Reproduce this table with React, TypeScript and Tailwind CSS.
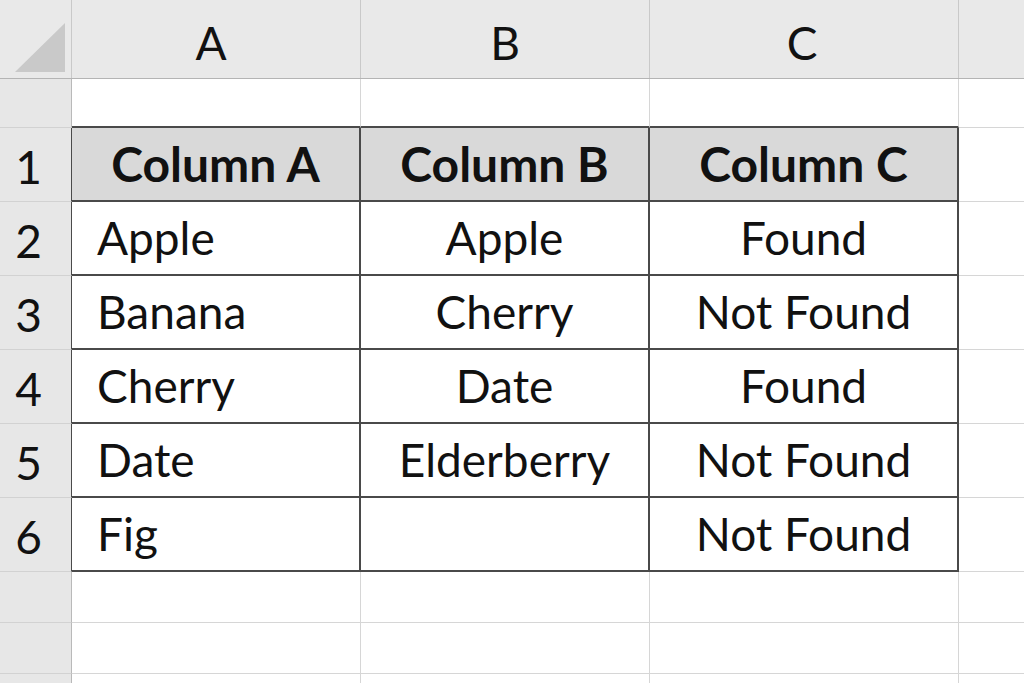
import React from "react";

type Row = { num: string; a: string; b: string; c: string };

const data: Row[] = [
  { num: "2", a: "Apple", b: "Apple", c: "Found" },
  { num: "3", a: "Banana", b: "Cherry", c: "Not Found" },
  { num: "4", a: "Cherry", b: "Date", c: "Found" },
  { num: "5", a: "Date", b: "Elderberry", c: "Not Found" },
  { num: "6", a: "Fig", b: "", c: "Not Found" },
];

const font = { fontFamily: "Lato, 'Open Sans', sans-serif" };

const RowHead = ({ label, h, dark }: { label?: string; h: string; dark?: boolean }) => (
  <div
    className={`w-[72px] shrink-0 ${h} flex items-center justify-center pr-[14px] pt-[4px] bg-[#e7e7e7] border-b border-[#d2d2d2] border-r ${
      dark ? "border-r-[#4a4a4a]" : "border-r-[#b9b9b9]"
    } text-[46px] text-[#111] leading-none`}
  >
    {label}
  </div>
);

const App: React.FC = () => {
  return (
    <div className="w-[1024px] h-[683px] overflow-hidden bg-white" style={font}>
      {/* column letters */}
      <div className="flex h-[79px] bg-[#e9e9e9] border-b border-[#b4b4b4]">
        <div className="w-[72px] shrink-0 relative border-r border-[#c9c9c9]">
          <svg className="absolute left-0 top-0" width="72" height="78" viewBox="0 0 72 78">
            <polygon points="15,72 65,72 65,23" fill="#c9c9c9" />
          </svg>
        </div>
        <div className="w-[289px] shrink-0 flex items-center justify-center pt-[8px] pr-[10px] border-r border-[#c9c9c9] text-[46px] text-[#111] leading-none">A</div>
        <div className="w-[289px] shrink-0 flex items-center justify-center pt-[8px] border-r border-[#c9c9c9] text-[46px] text-[#111] leading-none">B</div>
        <div className="w-[309px] shrink-0 flex items-center justify-center pt-[8px] pr-[4px] border-r border-[#c9c9c9] text-[46px] text-[#111] leading-none">C</div>
        <div className="flex-1" />
      </div>

      {/* empty row above table */}
      <div className="flex">
        <RowHead h="h-[49px]" />
        <div className="w-[289px] shrink-0 h-[49px] border-b-2 border-b-[#4a4a4a] border-r border-r-[#d6d6d6]" />
        <div className="w-[289px] shrink-0 h-[49px] border-b-2 border-b-[#4a4a4a] border-r border-r-[#d6d6d6]" />
        <div className="w-[309px] shrink-0 h-[49px] border-b-2 border-b-[#4a4a4a] border-r border-r-[#d6d6d6]" />
        <div className="flex-1 h-[49px] border-b border-[#d6d6d6]" />
      </div>

      {/* table header */}
      <div className="flex">
        <RowHead label="1" h="h-[74px]" dark />
        <div className="w-[289px] shrink-0 h-[74px] flex items-center justify-center bg-[#d9d9d9] border-b-2 border-r-2 border-[#4a4a4a] font-bold text-[48px] text-[#111] leading-none">Column A</div>
        <div className="w-[289px] shrink-0 h-[74px] flex items-center justify-center bg-[#d9d9d9] border-b-2 border-r-2 border-[#4a4a4a] font-bold text-[48px] text-[#111] leading-none">Column B</div>
        <div className="w-[309px] shrink-0 h-[74px] flex items-center justify-center bg-[#d9d9d9] border-b-2 border-r-2 border-[#4a4a4a] font-bold text-[48px] text-[#111] leading-none">Column C</div>
        <div className="flex-1 h-[74px] border-b border-[#d6d6d6]" />
      </div>

      {data.map((r) => (
        <div className="flex" key={r.num}>
          <RowHead label={r.num} h="h-[74px]" dark />
          <div className="w-[289px] shrink-0 h-[74px] flex items-center pl-[25px] border-b-2 border-r-2 border-[#4a4a4a] text-[46px] text-[#111] leading-none">{r.a}</div>
          <div className="w-[289px] shrink-0 h-[74px] flex items-center justify-center border-b-2 border-r-2 border-[#4a4a4a] text-[46px] text-[#111] leading-none">{r.b}</div>
          <div className="w-[309px] shrink-0 h-[74px] flex items-center justify-center border-b-2 border-r-2 border-[#4a4a4a] text-[46px] text-[#111] leading-none">{r.c}</div>
          <div className="flex-1 h-[74px] border-b border-[#d6d6d6]" />
        </div>
      ))}

      {/* empty rows below */}
      {[0, 1, 2].map((i) => (
        <div className="flex" key={i}>
          <RowHead h="h-[51px]" />
          <div className="w-[289px] shrink-0 h-[51px] border-b border-r border-[#d6d6d6]" />
          <div className="w-[289px] shrink-0 h-[51px] border-b border-r border-[#d6d6d6]" />
          <div className="w-[309px] shrink-0 h-[51px] border-b border-r border-[#d6d6d6]" />
          <div className="flex-1 h-[51px] border-b border-[#d6d6d6]" />
        </div>
      ))}
    </div>
  );
};

export default App;
